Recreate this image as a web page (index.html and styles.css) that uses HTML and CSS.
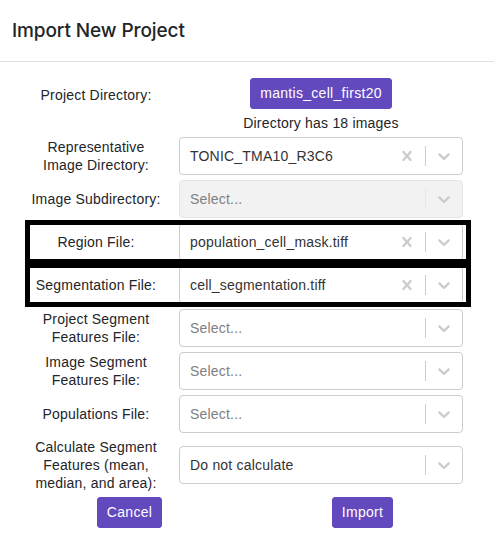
FILE: index.html
```html
<!DOCTYPE html>
<html>
<head>
<meta charset="utf-8">
<link rel="stylesheet" href="styles.css">
</head>
<body>
<div class="modal">
  <div class="modal-header"><h4 class="modal-title">Import New Project</h4></div>
  <div class="modal-body">
    <div class="row row-dir">
      <div class="lbl lbl-dir">Project Directory:</div>
      <div class="dir-cell">
        <button class="btn">mantis_cell_first20</button>
        <div class="dir-note">Directory has 18 images</div>
      </div>
    </div>

    <div class="row">
      <div class="lbl">Representative<br>Image Directory:</div>
      <div class="select">
        <div class="value">TONIC_TMA10_R3C6</div>
        <div class="ind"><svg viewBox="0 0 20 20" class="ic"><path d="M14.348 14.849c-0.469 0.469-1.229 0.469-1.697 0l-2.651-3.030-2.651 3.029c-0.469 0.469-1.229 0.469-1.697 0-0.469-0.469-0.469-1.229 0-1.697l2.758-3.15-2.759-3.152c-0.469-0.469-0.469-1.228 0-1.697s1.228-0.469 1.697 0l2.652 3.031 2.651-3.031c0.469-0.469 1.228-0.469 1.697 0s0.469 1.229 0 1.697l-2.758 3.152 2.758 3.15c0.469 0.469 0.469 1.229 0 1.698z"/></svg></div>
        <span class="sep"></span>
        <div class="ind"><svg viewBox="0 0 20 20" class="ic"><path d="M4.516 7.548c0.436-0.446 1.043-0.481 1.576 0l3.908 3.747 3.908-3.747c0.533-0.481 1.141-0.446 1.574 0 0.436 0.445 0.408 1.197 0 1.615-0.406 0.418-4.695 4.502-4.695 4.502-0.217 0.223-0.502 0.335-0.787 0.335s-0.57-0.112-0.789-0.335c0 0-4.287-4.084-4.695-4.502s-0.436-1.17 0-1.615z"/></svg></div>
      </div>
    </div>

    <div class="row">
      <div class="lbl">Image Subdirectory:</div>
      <div class="select disabled">
        <div class="value placeholder">Select...</div>
        <span class="sep"></span>
        <div class="ind"><svg viewBox="0 0 20 20" class="ic"><path d="M4.516 7.548c0.436-0.446 1.043-0.481 1.576 0l3.908 3.747 3.908-3.747c0.533-0.481 1.141-0.446 1.574 0 0.436 0.445 0.408 1.197 0 1.615-0.406 0.418-4.695 4.502-4.695 4.502-0.217 0.223-0.502 0.335-0.787 0.335s-0.57-0.112-0.789-0.335c0 0-4.287-4.084-4.695-4.502s-0.436-1.17 0-1.615z"/></svg></div>
      </div>
    </div>

    <div class="row hl">
      <div class="lbl">Region File:</div>
      <div class="select">
        <div class="value">population_cell_mask.tiff</div>
        <div class="ind"><svg viewBox="0 0 20 20" class="ic"><path d="M14.348 14.849c-0.469 0.469-1.229 0.469-1.697 0l-2.651-3.030-2.651 3.029c-0.469 0.469-1.229 0.469-1.697 0-0.469-0.469-0.469-1.229 0-1.697l2.758-3.15-2.759-3.152c-0.469-0.469-0.469-1.228 0-1.697s1.228-0.469 1.697 0l2.652 3.031 2.651-3.031c0.469-0.469 1.228-0.469 1.697 0s0.469 1.229 0 1.697l-2.758 3.152 2.758 3.15c0.469 0.469 0.469 1.229 0 1.698z"/></svg></div>
        <span class="sep"></span>
        <div class="ind"><svg viewBox="0 0 20 20" class="ic"><path d="M4.516 7.548c0.436-0.446 1.043-0.481 1.576 0l3.908 3.747 3.908-3.747c0.533-0.481 1.141-0.446 1.574 0 0.436 0.445 0.408 1.197 0 1.615-0.406 0.418-4.695 4.502-4.695 4.502-0.217 0.223-0.502 0.335-0.787 0.335s-0.57-0.112-0.789-0.335c0 0-4.287-4.084-4.695-4.502s-0.436-1.17 0-1.615z"/></svg></div>
      </div>
    </div>

    <div class="row hl">
      <div class="lbl">Segmentation File:</div>
      <div class="select">
        <div class="value">cell_segmentation.tiff</div>
        <div class="ind"><svg viewBox="0 0 20 20" class="ic"><path d="M14.348 14.849c-0.469 0.469-1.229 0.469-1.697 0l-2.651-3.030-2.651 3.029c-0.469 0.469-1.229 0.469-1.697 0-0.469-0.469-0.469-1.229 0-1.697l2.758-3.15-2.759-3.152c-0.469-0.469-0.469-1.228 0-1.697s1.228-0.469 1.697 0l2.652 3.031 2.651-3.031c0.469-0.469 1.228-0.469 1.697 0s0.469 1.229 0 1.697l-2.758 3.152 2.758 3.15c0.469 0.469 0.469 1.229 0 1.698z"/></svg></div>
        <span class="sep"></span>
        <div class="ind"><svg viewBox="0 0 20 20" class="ic"><path d="M4.516 7.548c0.436-0.446 1.043-0.481 1.576 0l3.908 3.747 3.908-3.747c0.533-0.481 1.141-0.446 1.574 0 0.436 0.445 0.408 1.197 0 1.615-0.406 0.418-4.695 4.502-4.695 4.502-0.217 0.223-0.502 0.335-0.787 0.335s-0.57-0.112-0.789-0.335c0 0-4.287-4.084-4.695-4.502s-0.436-1.17 0-1.615z"/></svg></div>
      </div>
    </div>

    <div class="row">
      <div class="lbl">Project Segment<br>Features File:</div>
      <div class="select">
        <div class="value placeholder">Select...</div>
        <span class="sep"></span>
        <div class="ind"><svg viewBox="0 0 20 20" class="ic"><path d="M4.516 7.548c0.436-0.446 1.043-0.481 1.576 0l3.908 3.747 3.908-3.747c0.533-0.481 1.141-0.446 1.574 0 0.436 0.445 0.408 1.197 0 1.615-0.406 0.418-4.695 4.502-4.695 4.502-0.217 0.223-0.502 0.335-0.787 0.335s-0.57-0.112-0.789-0.335c0 0-4.287-4.084-4.695-4.502s-0.436-1.17 0-1.615z"/></svg></div>
      </div>
    </div>

    <div class="row">
      <div class="lbl">Image Segment<br>Features File:</div>
      <div class="select">
        <div class="value placeholder">Select...</div>
        <span class="sep"></span>
        <div class="ind"><svg viewBox="0 0 20 20" class="ic"><path d="M4.516 7.548c0.436-0.446 1.043-0.481 1.576 0l3.908 3.747 3.908-3.747c0.533-0.481 1.141-0.446 1.574 0 0.436 0.445 0.408 1.197 0 1.615-0.406 0.418-4.695 4.502-4.695 4.502-0.217 0.223-0.502 0.335-0.787 0.335s-0.57-0.112-0.789-0.335c0 0-4.287-4.084-4.695-4.502s-0.436-1.17 0-1.615z"/></svg></div>
      </div>
    </div>

    <div class="row">
      <div class="lbl">Populations File:</div>
      <div class="select">
        <div class="value placeholder">Select...</div>
        <span class="sep"></span>
        <div class="ind"><svg viewBox="0 0 20 20" class="ic"><path d="M4.516 7.548c0.436-0.446 1.043-0.481 1.576 0l3.908 3.747 3.908-3.747c0.533-0.481 1.141-0.446 1.574 0 0.436 0.445 0.408 1.197 0 1.615-0.406 0.418-4.695 4.502-4.695 4.502-0.217 0.223-0.502 0.335-0.787 0.335s-0.57-0.112-0.789-0.335c0 0-4.287-4.084-4.695-4.502s-0.436-1.17 0-1.615z"/></svg></div>
      </div>
    </div>

    <div class="row">
      <div class="lbl">Calculate Segment<br>Features (mean,<br>median, and area):</div>
      <div class="select">
        <div class="value">Do not calculate</div>
        <span class="sep"></span>
        <div class="ind"><svg viewBox="0 0 20 20" class="ic"><path d="M4.516 7.548c0.436-0.446 1.043-0.481 1.576 0l3.908 3.747 3.908-3.747c0.533-0.481 1.141-0.446 1.574 0 0.436 0.445 0.408 1.197 0 1.615-0.406 0.418-4.695 4.502-4.695 4.502-0.217 0.223-0.502 0.335-0.787 0.335s-0.57-0.112-0.789-0.335c0 0-4.287-4.084-4.695-4.502s-0.436-1.17 0-1.615z"/></svg></div>
      </div>
    </div>

    <div class="actions">
      <button class="btn btn-cancel">Cancel</button>
      <button class="btn">Import</button>
    </div>
  </div>
</div>
</body>
</html>
```

FILE: styles.css
```css
* { box-sizing: border-box; }
html, body {
  margin: 0;
  background: #fff;
}
body {
  font-family: "Liberation Sans", Arial, sans-serif;
  font-size: 14px;
  letter-spacing: 0.2px;
  color: #212529;
}
.modal {
  width: 494px;
}
.modal-header {
  padding: 16px 12px;
  border-bottom: 1px solid #dee2e6;
}
.modal-title {
  margin: 0;
  font-family: Inter, "Liberation Sans", sans-serif;
  font-size: 19px;
  line-height: 29px;
  font-weight: 500;
  letter-spacing: -0.1px;
  color: #212529;
}
.modal-body {
  padding: 16px;
  display: flex;
  flex-direction: column;
  gap: 5px;
}
.row {
  display: grid;
  grid-template-columns: 136px 284px;
  column-gap: 15px;
  width: 440px;
  margin-left: 12px;
  align-items: center;
}
.row.hl {
  outline: 5px solid #000;
  outline-offset: -2px;
}
.row-dir {
  align-items: start;
}
.lbl {
  text-align: center;
  line-height: 18px;
  color: #212529;
}
.lbl-dir {
  margin-top: 8px;
}
.dir-cell {
  display: flex;
  flex-direction: column;
  align-items: center;
}
.dir-note {
  margin-top: 5px;
  line-height: 18px;
  color: #212529;
}
.btn {
  font-family: inherit;
  font-size: 14px;
  letter-spacing: 0.3px;
  line-height: 21px;
  padding: 4px 9px;
  color: #fff;
  background: #6349be;
  border: 1px solid #6349be;
  border-radius: 3px;
}
.select {
  display: flex;
  align-items: center;
  height: 38px;
  border: 1px solid #ccc;
  border-radius: 4px;
  background: #fff;
}
.select.disabled {
  background: #f2f2f2;
  border-color: #e6e6e6;
}
.value {
  flex: 1;
  padding: 2px 8px 2px 10px;
  color: #333;
  white-space: nowrap;
  overflow: hidden;
}
.value.placeholder {
  color: #808080;
}
.ind {
  padding: 8px;
  display: flex;
}
.ic {
  width: 20px;
  height: 20px;
  fill: #ccc;
}
.sep {
  align-self: stretch;
  width: 1px;
  margin: 8px 0;
  background: #ccc;
}
.disabled .sep {
  background: #e6e6e6;
}
.actions {
  display: grid;
  grid-template-columns: 1fr 1fr;
  justify-items: center;
}
.btn-cancel {
  margin-right: 4px;
}
```
